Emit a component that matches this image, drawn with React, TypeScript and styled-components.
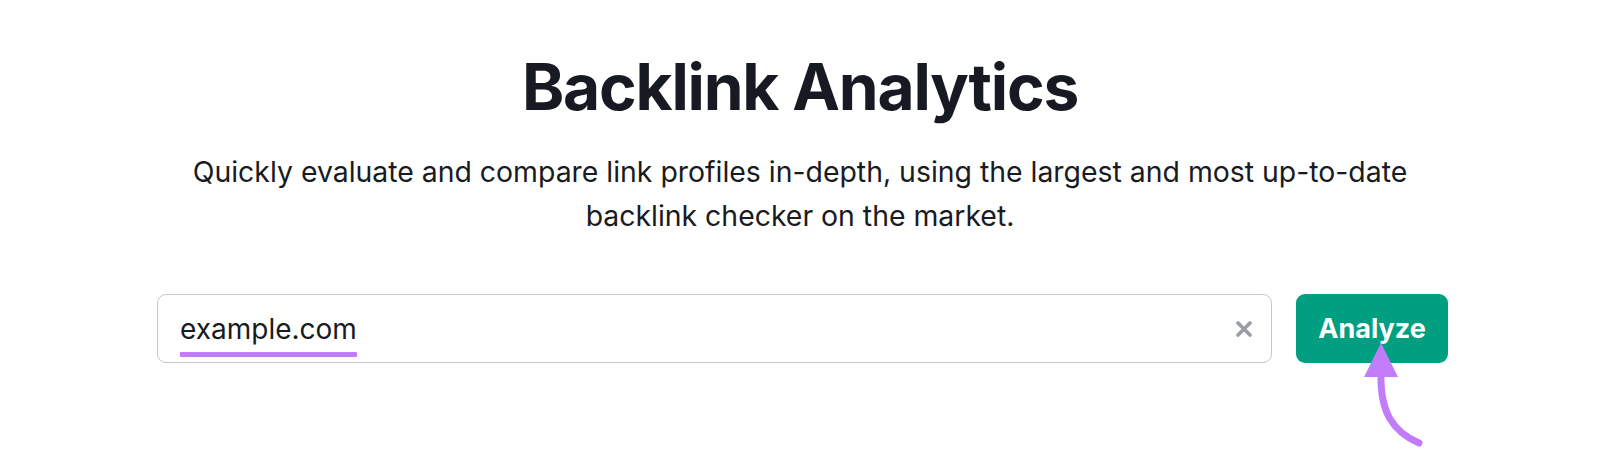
import React from "react";
import styled, { createGlobalStyle } from "styled-components";

const Global = createGlobalStyle`
  html, body { margin: 0; padding: 0; background: #ffffff; }
  body { font-family: Inter, "Noto Sans", sans-serif; color: #191b23; }
`;

const Page = styled.main`
  width: 1600px;
  height: 470px;
  box-sizing: border-box;
  padding-top: 47px;
  display: flex;
  flex-direction: column;
  align-items: center;
`;

const Title = styled.h1`
  margin: 0;
  font-family: Inter, "Noto Sans", sans-serif;
  font-weight: 700;
  font-size: 64px;
  line-height: 80px;
  letter-spacing: -1.2px;
  color: #171a22;
`;

const Subtitle = styled.p`
  margin: 23px 0 0;
  width: 1250px;
  text-align: center;
  font-size: 28.4px;
  line-height: 44px;
  font-weight: 400;
  color: #191b23;
`;

const SearchRow = styled.div`
  margin: 56px 0 0 5px;
  width: 1291px;
  display: flex;
  gap: 24px;
  position: relative;
`;

const InputBox = styled.div`
  flex: 1;
  height: 69px;
  box-sizing: border-box;
  border: 1.5px solid #c6c8d0;
  border-radius: 9px;
  display: flex;
  align-items: center;
  padding: 0 19px 0 22px;
  gap: 12px;
`;

const Value = styled.span`
  position: relative;
  font-size: 28px;
  color: #191b23;
  line-height: 32px;
  &::after {
    content: "";
    position: absolute;
    left: 0;
    right: 0;
    bottom: -12px;
    height: 5px;
    border-radius: 1px;
    background: #c27cfa;
  }
`;

const Spacer = styled.div`
  flex: 1;
`;

const ClearIcon = styled.svg`
  width: 16px;
  height: 16px;
  flex: none;
`;

const Button = styled.button`
  width: 152px;
  height: 69px;
  border: none;
  border-radius: 9px;
  background: #009f81;
  color: #ffffff;
  font-family: Inter, "Noto Sans", sans-serif;
  font-weight: 700;
  font-size: 27px;
  padding: 0;
  cursor: pointer;
`;

const Arrow = styled.svg`
  position: absolute;
  left: 1194px;
  top: 40px;
  overflow: visible;
`;

export default function App() {
  return (
    <>
      <Global />
      <Page>
        <Title>Backlink Analytics</Title>
        <Subtitle>
          Quickly evaluate and compare link profiles in-depth, using the largest and most up-to-date backlink checker on the market.
        </Subtitle>
        <SearchRow>
          <InputBox>
            <Value>example.com</Value>
            <Spacer />
            <ClearIcon viewBox="0 0 16 16">
              <path d="M2 2 L14 14 M14 2 L2 14" stroke="#9b9da6" strokeWidth="3.6" strokeLinecap="round" />
            </ClearIcon>
          </InputBox>
          <Button>Analyze</Button>
          <Arrow width="100" height="130" viewBox="0 0 100 130">
            <path d="M30 40 C 29 78, 42 98, 68 109" fill="none" stroke="#c27cfa" strokeWidth="7" strokeLinecap="round" />
            <polygon points="30,9 13,43 47,43" fill="#c27cfa" />
          </Arrow>
        </SearchRow>
      </Page>
    </>
  );
}
